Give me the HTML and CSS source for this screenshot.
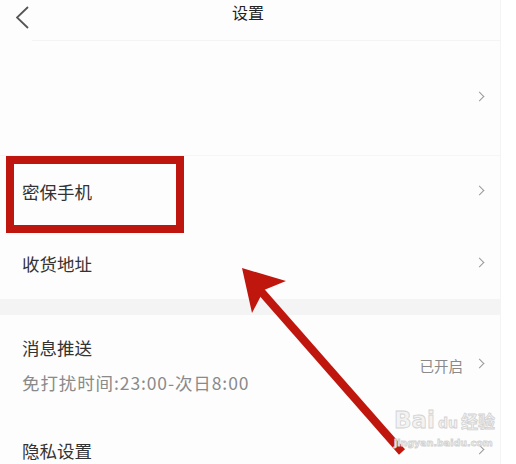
FILE: index.html
```html
<!DOCTYPE html>
<html lang="zh">
<head>
<meta charset="utf-8">
<link rel="stylesheet" href="styles.css">
</head>
<body>
<div class="page">
  <header class="header">
    <svg class="back" width="14" height="24" viewBox="0 0 14 24"><polyline points="12,1 1,11.5 12,22" fill="none" stroke="#555" stroke-width="1.8"/></svg>
    <span class="title">设置</span>
  </header>
  <div class="row row-blank">
    <span class="label"></span>
    <span class="chev"></span>
  </div>
  <div class="row">
    <span class="label">密保手机</span>
    <span class="chev"></span>
  </div>
  <div class="row">
    <span class="label">收货地址</span>
    <span class="chev"></span>
  </div>
  <div class="band"></div>
  <div class="row row-tall">
    <div class="stack">
      <span class="label">消息推送</span>
      <span class="sub">免打扰时间:23:00-次日8:00</span>
    </div>
    <span class="value">已开启</span>
    <span class="chev"></span>
  </div>
  <div class="row">
    <span class="label">隐私设置</span>
    <span class="chev"></span>
  </div>

  <div class="highlight"></div>
  <svg class="arrow" width="516" height="464" viewBox="0 0 516 464">
    <line x1="258" y1="288" x2="402" y2="452" stroke="#bf170e" stroke-width="8"/>
    <polygon points="242,268 286,281 264,290 252,313" fill="#bf170e"/>
  </svg>
  <div class="watermark">
    <div class="wm-top"><span class="wm-bai">Bai</span><span class="wm-du">du</span><span class="wm-jy">经验</span></div>
    <div class="wm-url">jingyan.baidu.com</div>
  </div>
</div>
</body>
</html>
```
FILE: styles.css
```css
html, body {
  margin: 0;
  padding: 0;
  background: #ffffff;
}
body {
  font-family: "Noto Sans CJK SC", "Noto Sans", sans-serif;
  width: 516px;
  height: 464px;
  overflow: hidden;
}
.page {
  position: relative;
  width: 500px;
  height: 464px;
  overflow: hidden;
  background: #fdfdfd;
  border-right: 1px solid #f4f4f4;
}
.header {
  position: relative;
  height: 40px;
  display: flex;
  align-items: center;
  justify-content: center;
  border-bottom: 1px solid #f4f4f4;
  margin-left: 32px;
}
.back {
  position: absolute;
  left: -16px;
  top: 6px;
}
.title {
  font-size: 16px;
  color: #222;
  margin-left: -36px;
  margin-top: -17px;
}
.row {
  height: 72px;
  display: flex;
  align-items: center;
  padding: 0 17px 0 22px;
}
.row-blank {
  height: 114px;
  border-bottom: 1px solid #f6f6f6;
}
.row-tall {
  height: 100px;
}
.label {
  font-size: 17.5px;
  line-height: 24px;
  color: #333;
  flex: 1;
}
.stack {
  flex: 1;
  display: flex;
  flex-direction: column;
  gap: 11px;
}
.sub {
  font-size: 17.5px;
  line-height: 24px;
  color: #8a8a8a;
  letter-spacing: 0.9px;
}
.value {
  font-size: 14.5px;
  color: #8a8a8a;
  margin-right: 13px;
}
.chev {
  width: 6px;
  height: 6px;
  border-top: 1.3px solid #9a9a9a;
  border-right: 1.3px solid #9a9a9a;
  transform: rotate(45deg);
  margin-top: -3px;
}
.band {
  height: 16px;
  background: #f4f4f4;
  margin-top: -1px;
}
.highlight {
  position: absolute;
  left: 6px;
  top: 156px;
  width: 178px;
  height: 77px;
  box-sizing: border-box;
  border: 8px solid #bf150f;
}
.arrow {
  position: absolute;
  left: 0;
  top: 0;
}
.watermark {
  position: absolute;
  left: 394px;
  top: 407px;
  width: 100px;
  color: #f3f3f3;
  font-family: "DejaVu Sans", sans-serif;
  -webkit-text-stroke: 0.8px #d2d2d2;
}
.wm-top {
  display: flex;
  align-items: baseline;
  font-size: 23px;
  font-weight: bold;
  line-height: 27px;
  white-space: nowrap;
}
.wm-du {
  font-size: 14px;
  margin: 0 3px;
}
.wm-jy {
  font-family: "Noto Sans CJK SC", sans-serif;
  font-size: 17px;
}
.wm-url {
  font-size: 9.5px;
  line-height: 12px;
  font-weight: bold;
  white-space: nowrap;
}
```
